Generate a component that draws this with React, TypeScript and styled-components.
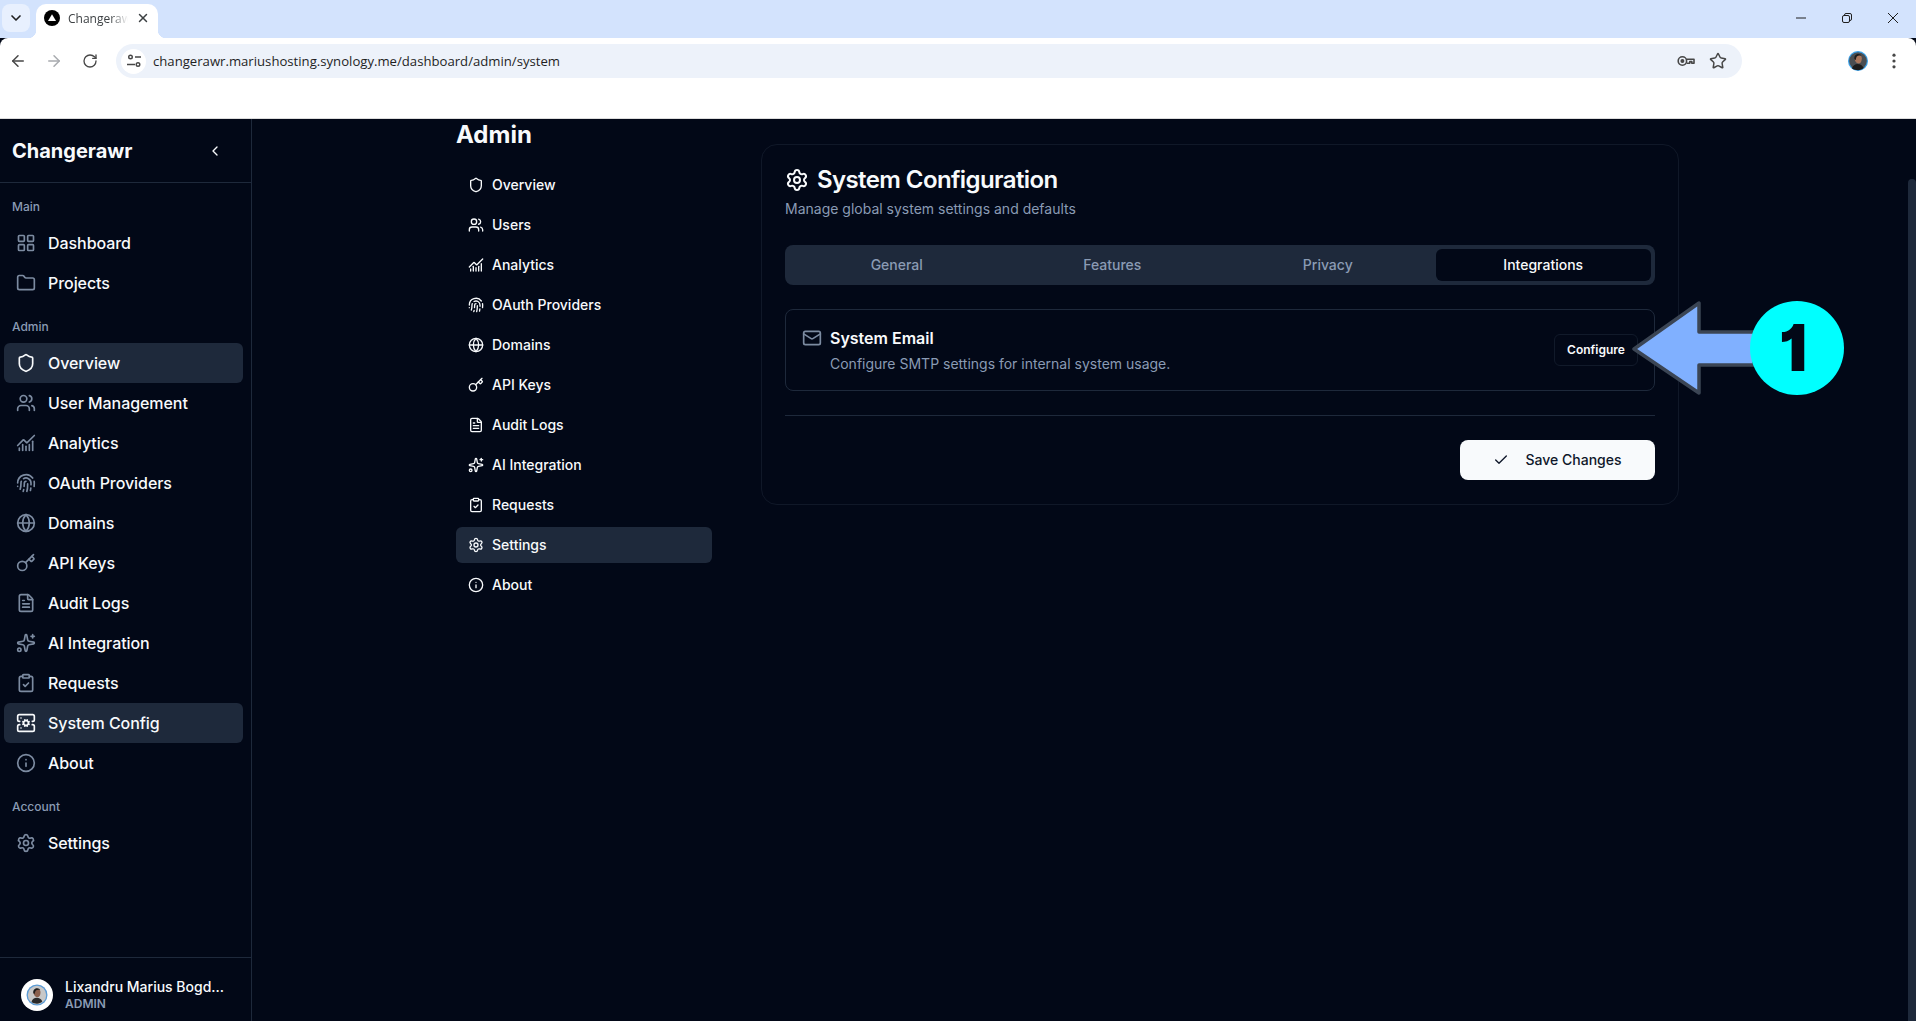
import React from "react";
import styled, { createGlobalStyle } from "styled-components";
import {
  ArrowLeft,
  ArrowRight,
  Check,
  ChartNoAxesCombined,
  ChevronDown,
  ChevronLeft,
  ClipboardCheck,
  FileText,
  Fingerprint,
  Folder,
  Globe,
  Info,
  Key,
  LayoutGrid,
  Mail,
  RotateCw,
  ServerCog,
  Settings,
  Shield,
  Sparkles,
  Star,
  Users,
  X,
} from "lucide-react";

const muted = "#8a9bb4";
const iconMuted = "#7c8ba1";

const Global = createGlobalStyle`
  * { box-sizing: border-box; }
  html, body { margin: 0; height: 100%; overflow: hidden; background: #020817; }
  #root { height: 100%; }
  button { font: inherit; }
`;

const Shell = styled.div`
  position: relative;
  display: flex;
  flex-direction: column;
  height: 100vh;
  font-family: Inter, "Liberation Sans", sans-serif;
  color: #f8fafc;
`;

/* browser chrome */
const Strip = styled.div`
  display: flex;
  align-items: flex-start;
  height: 38px;
  flex: none;
  padding: 4px 0 0 2px;
  background: #d3e3fd;
  font-family: "Open Sans", "Liberation Sans", sans-serif;
`;
const TabMenu = styled.div`
  display: flex;
  align-items: center;
  justify-content: center;
  width: 28px;
  height: 28px;
  border-radius: 8px;
  background: #e8f0fe;
  color: #1f1f1f;
`;
const Tab = styled.div`
  position: relative;
  display: flex;
  align-items: center;
  width: 122px;
  height: 34px;
  margin-left: 6px;
  padding: 0 8px 6px;
  background: #fff;
  border-radius: 10px 10px 0 0;
  color: #3c4043;
  font-size: 12px;
  &::before,
  &::after {
    content: "";
    position: absolute;
    bottom: 0;
    width: 8px;
    height: 8px;
  }
  &::before {
    left: -8px;
    background: radial-gradient(circle at 0 0, transparent 8px, #fff 8.5px);
  }
  &::after {
    right: -8px;
    background: radial-gradient(circle at 100% 0, transparent 8px, #fff 8.5px);
  }
`;
const TabTitle = styled.span`
  width: 60px;
  margin-left: 8px;
  overflow: hidden;
  white-space: nowrap;
  -webkit-mask-image: linear-gradient(90deg, #000 70%, transparent);
  mask-image: linear-gradient(90deg, #000 70%, transparent);
`;
const TabClose = styled.span`
  display: flex;
  margin-left: auto;
  color: #3c4043;
`;
const WindowControls = styled.div`
  display: flex;
  margin-left: auto;
  margin-top: -4px;
`;
const WindowButton = styled.div`
  display: flex;
  align-items: center;
  justify-content: center;
  width: 46px;
  height: 36px;
  color: #1f1f1f;
`;
const Toolbar = styled.div`
  display: flex;
  align-items: flex-start;
  height: 81px;
  flex: none;
  padding-top: 6px;
  background: #fff;
  border-radius: 8px 8px 0 0;
  border-bottom: 1px solid #dcdcdc;
  font-family: "Open Sans", "Liberation Sans", sans-serif;
`;
const NavButton = styled.div<{ $off?: boolean }>`
  display: flex;
  align-items: center;
  justify-content: center;
  width: 36px;
  height: 34px;
  color: ${(p) => (p.$off ? "#a8abaf" : "#474747")};
`;
const AddressBar = styled.div`
  display: flex;
  align-items: center;
  width: 1626px;
  height: 34px;
  margin-left: 8px;
  padding: 0 15px 0 5px;
  border-radius: 17px;
  background: #edf2fa;
`;
const SiteIcon = styled.div`
  display: flex;
  align-items: center;
  justify-content: center;
  width: 25px;
  height: 25px;
  border-radius: 50%;
  background: #fff;
  color: #474747;
`;
const Url = styled.span`
  margin-left: 7px;
  color: #1f1f1f;
  font-size: 13.15px;
  white-space: nowrap;
`;
const AddressActions = styled.div`
  display: flex;
  align-items: center;
  gap: 14px;
  margin-left: auto;
  color: #474747;
`;
const ToolbarEnd = styled.div`
  display: flex;
  align-items: center;
  justify-content: flex-end;
  flex: 1;
  height: 34px;
  gap: 17px;
  padding-right: 13px;
  color: #474747;
`;

/* app */
const Page = styled.div`
  display: flex;
  flex: 1;
  min-height: 0;
  background: #020817;
`;
const Sidebar = styled.aside`
  display: flex;
  flex-direction: column;
  flex: none;
  width: 252px;
  border-right: 1px solid #1e293b;
`;
const SidebarHead = styled.div`
  display: flex;
  align-items: center;
  justify-content: space-between;
  flex: none;
  height: 64px;
  padding: 0 28px 0 12px;
  border-bottom: 1px solid #1e293b;
  color: #f8fafc;
`;
const Brand = styled.div`
  font-size: 20px;
  font-weight: 700;
`;
const SidebarNav = styled.nav`
  display: flex;
  flex-direction: column;
  flex: 1;
  padding: 16px 8px 0 4px;
`;
const GroupLabel = styled.div`
  height: 16px;
  margin: 0 0 8px 8px;
  color: ${muted};
  font-size: 12px;
  font-weight: 500;
  line-height: 16px;
`;
const Group = styled.div`
  margin-bottom: 16px;
`;
const SideItem = styled.div<{ $active?: boolean }>`
  display: flex;
  align-items: center;
  gap: 12px;
  height: 40px;
  padding-left: 12px;
  border-radius: 6px;
  background: ${(p) => (p.$active ? "#1e293b" : "transparent")};
  font-size: 16px;
  font-weight: 500;
  letter-spacing: -0.06px;
  svg {
    color: ${(p) => (p.$active ? "#f8fafc" : iconMuted)};
    flex: none;
  }
`;
const SidebarFoot = styled.div`
  display: flex;
  align-items: center;
  flex: none;
  gap: 12px;
  height: 64px;
  padding: 10px 0 0 21px;
  border-top: 1px solid #1e293b;
`;
const UserName = styled.div`
  font-size: 14px;
  font-weight: 500;
  line-height: 18px;
  white-space: nowrap;
`;
const UserRole = styled.div`
  color: ${muted};
  font-size: 12px;
  font-weight: 600;
  line-height: 16px;
`;
const AdminColumn = styled.div`
  flex: none;
  width: 256px;
  margin-left: 204px;
`;
const AdminTitle = styled.h1`
  margin: 0 0 16px;
  font-size: 24px;
  font-weight: 700;
  line-height: 32px;
`;
const AdminNav = styled.nav`
  display: flex;
  flex-direction: column;
  gap: 4px;
`;
const AdminItem = styled.div<{ $active?: boolean }>`
  display: flex;
  align-items: center;
  gap: 8px;
  height: 36px;
  padding: 0 0 1px 12px;
  border-radius: 6px;
  background: ${(p) => (p.$active ? "#1e293b" : "transparent")};
  font-size: 14px;
  font-weight: 500;
`;
const Card = styled.section`
  flex: none;
  align-self: flex-start;
  width: 918px;
  height: 361px;
  margin: 25px 0 0 49px;
  padding: 19px 23px 0;
  border: 1px solid #101828;
  border-radius: 16px;
`;
const CardTitle = styled.h2`
  display: flex;
  align-items: center;
  gap: 8px;
  margin: 0;
  font-size: 24px;
  font-weight: 600;
  letter-spacing: -0.6px;
  line-height: 32px;
`;
const CardSub = styled.p`
  margin: 3px 0 0;
  color: ${muted};
  font-size: 14px;
  line-height: 20px;
`;
const Tabs = styled.div`
  display: grid;
  grid-template-columns: repeat(4, 1fr);
  height: 40px;
  margin-top: 26px;
  padding: 4px;
  border-radius: 8px;
  background: #1e293b;
`;
const TabTrigger = styled.div<{ $active?: boolean }>`
  display: flex;
  align-items: center;
  justify-content: center;
  padding-bottom: 1px;
  border-radius: 6px;
  background: ${(p) => (p.$active ? "#020817" : "transparent")};
  color: ${(p) => (p.$active ? "#f8fafc" : muted)};
  font-size: 14px;
  font-weight: 500;
`;
const EmailRow = styled.div`
  display: flex;
  align-items: center;
  justify-content: space-between;
  height: 82px;
  margin-top: 24px;
  padding: 0 16px;
  border: 1px solid #1e293b;
  border-radius: 8px;
`;
const EmailInfo = styled.div`
  display: flex;
  align-items: flex-start;
  gap: 8px;
  svg {
    color: ${iconMuted};
    margin-top: 2px;
  }
`;
const EmailTitle = styled.div`
  font-size: 16px;
  font-weight: 600;
  line-height: 24px;
`;
const EmailDesc = styled.div`
  margin-top: 4px;
  color: ${muted};
  font-size: 14px;
  line-height: 20px;
`;
const ConfigureButton = styled.button`
  width: 84px;
  height: 32px;
  padding: 0 0 1px;
  border: 1px solid #111a2a;
  border-radius: 6px;
  background: #020817;
  color: #f8fafc;
  font-family: inherit;
  font-size: 12px;
  font-weight: 600;
`;
const Divider = styled.hr`
  height: 1px;
  margin: 24px 0;
  border: 0;
  background: #1e293b;
`;
const Actions = styled.div`
  display: flex;
  justify-content: flex-end;
`;
const SaveButton = styled.button`
  display: flex;
  align-items: center;
  justify-content: center;
  gap: 16px;
  width: 195px;
  height: 40px;
  padding: 0 0 1px;
  border: 0;
  border-radius: 8px;
  background: #f8fafc;
  color: #0f172a;
  font-family: inherit;
  font-size: 14px;
  font-weight: 500;
`;
const ScrollTrack = styled.div`
  flex: none;
  width: 8px;
  margin: 60px 0 0 auto;
  border-radius: 4px 4px 0 0;
  background: #1e293b;
`;

/* annotation drawn over the screenshot */
const CalloutArrow = styled.svg`
  position: absolute;
  left: 1630px;
  top: 298px;
`;
const CalloutBadge = styled.div`
  position: absolute;
  left: 1750px;
  top: 301px;
  display: flex;
  align-items: center;
  justify-content: center;
  width: 94px;
  height: 94px;
  padding-right: 8px;
  border-radius: 50%;
  background: #00ffff;
  color: #020817;
  font-size: 64px;
  font-weight: 900;
  font-feature-settings: "cv01";
  line-height: 1;
`;

const Favicon = () => (
  <svg width="16" height="16" viewBox="0 0 16 16">
    <circle cx="8" cy="8" r="8" fill="#000" />
    <path d="M8 4.2 12 11H4z" fill="#fff" />
  </svg>
);

const TuneIcon = () => (
  <svg width="16" height="16" viewBox="0 0 16 16" fill="none" stroke="currentColor" strokeWidth="1.4">
    <circle cx="4.5" cy="4" r="1.8" />
    <path d="M9 4h6M1 11.5h8" />
    <circle cx="12" cy="11.5" r="1.8" />
  </svg>
);

const PasswordKey = () => (
  <svg width="18" height="18" viewBox="0 0 18 18" fill="none" stroke="currentColor" strokeWidth="1.6">
    <circle cx="5.4" cy="9" r="4.2" />
    <circle cx="5.4" cy="9" r="1.2" fill="currentColor" />
    <path d="M9.6 7.2H17v4h-2.2v-1.6h-2v1.6h-3" strokeLinejoin="round" />
  </svg>
);

const Kebab = () => (
  <svg width="18" height="18" viewBox="0 0 18 18" fill="currentColor">
    <circle cx="9" cy="3.2" r="1.6" />
    <circle cx="9" cy="9" r="1.6" />
    <circle cx="9" cy="14.8" r="1.6" />
  </svg>
);

const ProfilePhoto = () => (
  <svg width="20" height="20" viewBox="0 0 20 20">
    <circle cx="10" cy="10" r="10" fill="#3aa0e8" />
    <circle cx="10" cy="10" r="8.8" fill="#4a4e52" />
    <path d="M6.5 8c0-3 1.8-4.3 3.8-4.3 2.2 0 3.5 1.4 3.5 3.6 0 2.8-1 5.2-2.8 5.2-2 0-3.8-1.5-4.5-4.5z" fill="#a9765c" />
    <path d="M6.3 8.3C6 4.5 8 3 10.4 3c1.6 0 2.6.7 3 1.8-2-.6-3.5-.2-4.6.8-.6 1-.8 2-1 3.4z" fill="#1d1d1d" />
    <path d="M4 17.5c.8-3 3-4.5 5.5-4.5 2.8 0 5 1.4 6 4-1.5 1.4-3.4 2.2-5.5 2.2s-4.4-.6-6-1.7z" fill="#1c1c1c" />
  </svg>
);

const SidebarAvatar = () => (
  <svg width="32" height="32" viewBox="0 0 32 32">
    <circle cx="16" cy="16" r="16" fill="#fff" />
    <circle cx="16" cy="16" r="10.5" fill="#5b9bd5" />
    <circle cx="16" cy="16" r="9.2" fill="#c8c8c8" />
    <path d="M12.5 14c0-3 1.5-4.2 3.6-4.2 2.2 0 3.4 1.4 3.4 3.5 0 2.8-1 5-2.8 5-1.9 0-3.5-1.4-4.2-4.3z" fill="#8a5f4c" />
    <path d="M12.3 14.2c-.3-3.6 1.6-5 3.9-5 1.6 0 2.6.7 3 1.8-2-.6-3.5-.2-4.5.8-.6.9-.9 1.9-1.1 3.2z" fill="#1d1d1d" />
    <path d="M10.5 23c.8-2.8 2.8-4.2 5.2-4.2 2.6 0 4.6 1.3 5.6 3.7-1.4 1.3-3.2 2.2-5.3 2.2-2 0-4-.6-5.5-1.7z" fill="#2a2a2a" />
  </svg>
);

const mainItems = [
  { label: "Dashboard", icon: LayoutGrid },
  { label: "Projects", icon: Folder },
];
const adminItems = [
  { label: "Overview", icon: Shield, active: true },
  { label: "User Management", icon: Users },
  { label: "Analytics", icon: ChartNoAxesCombined },
  { label: "OAuth Providers", icon: Fingerprint },
  { label: "Domains", icon: Globe },
  { label: "API Keys", icon: Key },
  { label: "Audit Logs", icon: FileText },
  { label: "AI Integration", icon: Sparkles },
  { label: "Requests", icon: ClipboardCheck },
  { label: "System Config", icon: ServerCog, active: true },
  { label: "About", icon: Info },
];
const adminSubnav = [
  { label: "Overview", icon: Shield },
  { label: "Users", icon: Users },
  { label: "Analytics", icon: ChartNoAxesCombined },
  { label: "OAuth Providers", icon: Fingerprint },
  { label: "Domains", icon: Globe },
  { label: "API Keys", icon: Key },
  { label: "Audit Logs", icon: FileText },
  { label: "AI Integration", icon: Sparkles },
  { label: "Requests", icon: ClipboardCheck },
  { label: "Settings", icon: Settings, active: true },
  { label: "About", icon: Info },
];
const tabs = ["General", "Features", "Privacy", "Integrations"];

const SideLink: React.FC<{ item: { label: string; icon: typeof Shield; active?: boolean } }> = ({ item }) => (
  <SideItem $active={item.active}>
    <item.icon size={20} strokeWidth={2} />
    {item.label}
  </SideItem>
);

export default function App() {
  return (
    <Shell>
      <Global />
      <Strip>
        <TabMenu>
          <ChevronDown size={16} strokeWidth={2.5} />
        </TabMenu>
        <Tab>
          <Favicon />
          <TabTitle>Changerawr</TabTitle>
          <TabClose>
            <X size={14} strokeWidth={2.5} />
          </TabClose>
        </Tab>
        <WindowControls>
          <WindowButton>
            <svg width="10" height="10" viewBox="0 0 10 10" stroke="currentColor">
              <path d="M0 5h10" />
            </svg>
          </WindowButton>
          <WindowButton>
            <svg width="10" height="10" viewBox="0 0 10 10" fill="none" stroke="currentColor">
              <rect x=".5" y="2.5" width="7" height="7" rx="1.5" />
              <path d="M2.5 2.5v-.5a1.5 1.5 0 0 1 1.5-1.5h4a1.5 1.5 0 0 1 1.5 1.5v4a1.5 1.5 0 0 1-1.5 1.5" />
            </svg>
          </WindowButton>
          <WindowButton>
            <svg width="10" height="10" viewBox="0 0 10 10" stroke="currentColor">
              <path d="M0 0l10 10M10 0 0 10" />
            </svg>
          </WindowButton>
        </WindowControls>
      </Strip>
      <Toolbar>
        <NavButton>
          <ArrowLeft size={18} />
        </NavButton>
        <NavButton $off>
          <ArrowRight size={18} />
        </NavButton>
        <NavButton>
          <RotateCw size={16} />
        </NavButton>
        <AddressBar>
          <SiteIcon>
            <TuneIcon />
          </SiteIcon>
          <Url>changerawr.mariushosting.synology.me/dashboard/admin/system</Url>
          <AddressActions>
            <PasswordKey />
            <Star size={18} />
          </AddressActions>
        </AddressBar>
        <ToolbarEnd>
          <ProfilePhoto />
          <Kebab />
        </ToolbarEnd>
      </Toolbar>
      <Page>
        <Sidebar>
          <SidebarHead>
            <Brand>Changerawr</Brand>
            <ChevronLeft size={16} />
          </SidebarHead>
          <SidebarNav>
            <Group>
              <GroupLabel>Main</GroupLabel>
              {mainItems.map((item) => (
                <SideLink key={item.label} item={item} />
              ))}
            </Group>
            <Group>
              <GroupLabel>Admin</GroupLabel>
              {adminItems.map((item) => (
                <SideLink key={item.label} item={item} />
              ))}
            </Group>
            <Group>
              <GroupLabel>Account</GroupLabel>
              <SideLink item={{ label: "Settings", icon: Settings }} />
            </Group>
          </SidebarNav>
          <SidebarFoot>
            <SidebarAvatar />
            <div>
              <UserName>Lixandru Marius Bogd...</UserName>
              <UserRole>ADMIN</UserRole>
            </div>
          </SidebarFoot>
        </Sidebar>
        <AdminColumn>
          <AdminTitle>Admin</AdminTitle>
          <AdminNav>
            {adminSubnav.map((item) => (
              <AdminItem key={item.label} $active={item.active}>
                <item.icon size={16} />
                {item.label}
              </AdminItem>
            ))}
          </AdminNav>
        </AdminColumn>
        <Card>
          <CardTitle>
            <Settings size={24} />
            System Configuration
          </CardTitle>
          <CardSub>Manage global system settings and defaults</CardSub>
          <Tabs>
            {tabs.map((t) => (
              <TabTrigger key={t} $active={t === "Integrations"}>
                {t}
              </TabTrigger>
            ))}
          </Tabs>
          <EmailRow>
            <EmailInfo>
              <Mail size={20} />
              <div>
                <EmailTitle>System Email</EmailTitle>
                <EmailDesc>Configure SMTP settings for internal system usage.</EmailDesc>
              </div>
            </EmailInfo>
            <ConfigureButton>Configure</ConfigureButton>
          </EmailRow>
          <Divider />
          <Actions>
            <SaveButton>
              <Check size={16} />
              Save Changes
            </SaveButton>
          </Actions>
        </Card>
        <ScrollTrack />
      </Page>
      <CalloutArrow width="124" height="100" viewBox="0 0 124 100">
        <path
          d="M4 51 69 5v29h55v33H69v28z"
          fill="#80b0ff"
          stroke="#3b4554"
          strokeWidth="3.5"
          strokeLinejoin="round"
        />
      </CalloutArrow>
      <CalloutBadge>1</CalloutBadge>
    </Shell>
  );
}
